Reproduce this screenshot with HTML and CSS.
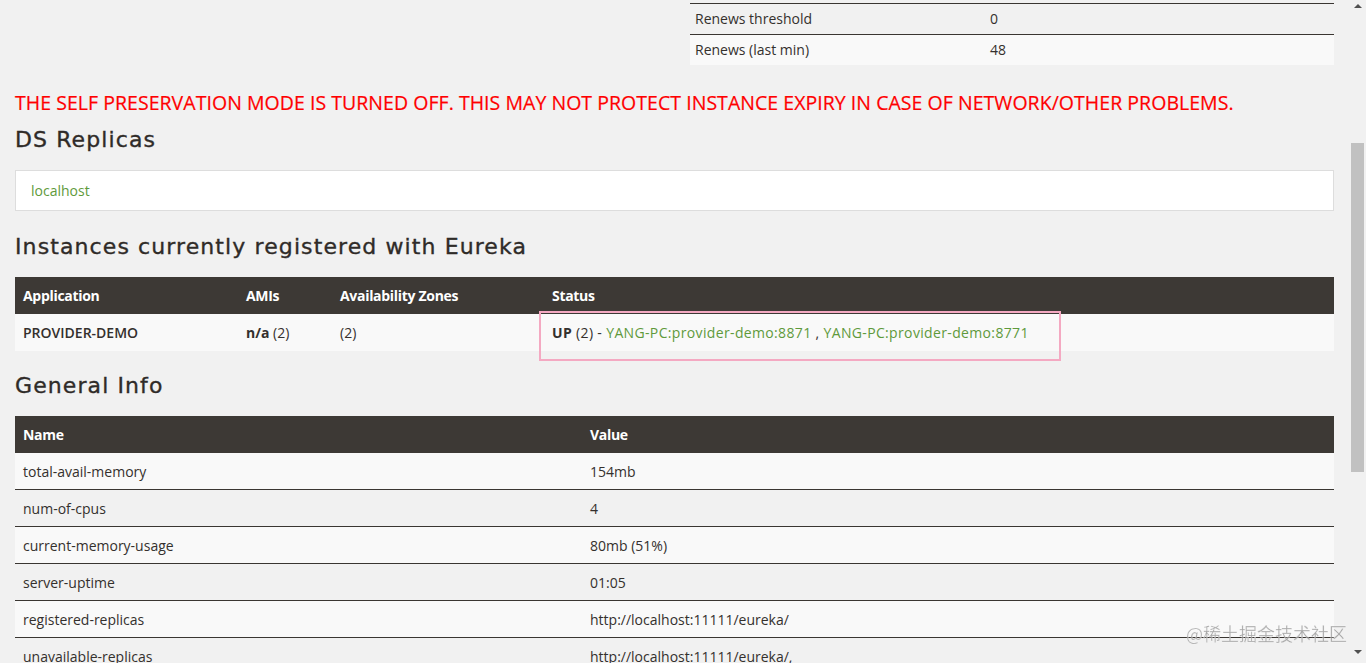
FILE: index.html
```html
<!DOCTYPE html>
<html lang="en">
<head>
<meta charset="utf-8">
<title>Eureka</title>
<link rel="stylesheet" href="styles.css">
</head>
<body>
<div class="page">
  <div class="container">
    <div class="status-row">
      <div class="col"></div>
      <div class="col">
        <table class="kv">
          <tr><td class="k">Renews threshold</td><td>0</td></tr>
          <tr class="alt"><td class="k">Renews (last min)</td><td>48</td></tr>
        </table>
      </div>
    </div>

    <h4 class="warn">THE SELF PRESERVATION MODE IS TURNED OFF. THIS MAY NOT PROTECT INSTANCE EXPIRY IN CASE OF NETWORK/OTHER PROBLEMS.</h4>

    <h1 class="title">DS Replicas</h1>
    <ul class="replicas">
      <li><a class="link" href="#">localhost</a></li>
    </ul>

    <h1 class="title">Instances currently registered with Eureka</h1>
    <table class="grid instances">
      <thead>
        <tr><th class="c-app">Application</th><th class="c-ami">AMIs</th><th class="c-zone">Availability Zones</th><th>Status</th></tr>
      </thead>
      <tbody>
        <tr class="light">
          <td class="b">PROVIDER-DEMO</td>
          <td><b>n/a</b> (2)</td>
          <td>(2)</td>
          <td class="status-cell"><b>UP</b> (2) - <a class="link" href="#">YANG-PC:provider-demo:8871</a> , <a class="link" href="#">YANG-PC:provider-demo:8771</a><span class="mark"></span></td>
        </tr>
      </tbody>
    </table>

    <h1 class="title">General Info</h1>
    <table class="grid info">
      <thead>
        <tr><th class="c-name">Name</th><th>Value</th></tr>
      </thead>
      <tbody>
        <tr class="light"><td>total-avail-memory</td><td>154mb</td></tr>
        <tr class="dark"><td>num-of-cpus</td><td>4</td></tr>
        <tr class="light"><td>current-memory-usage</td><td>80mb (51%)</td></tr>
        <tr class="dark"><td>server-uptime</td><td>01:05</td></tr>
        <tr class="light"><td>registered-replicas</td><td>http://localhost:11111/eureka/</td></tr>
        <tr class="dark"><td>unavailable-replicas</td><td>http://localhost:11111/eureka/,</td></tr>
        <tr class="light"><td>available-replicas</td><td></td></tr>
      </tbody>
    </table>
  </div>
</div>

<div class="scrollbar">
  <span class="arrow up"></span>
  <span class="thumb"></span>
  <span class="arrow down"></span>
</div>
<div class="watermark">@稀土掘金技术社区</div>
</body>
</html>
```

FILE: styles.css
```css
html, body {
  margin: 0;
  padding: 0;
  height: 100%;
  overflow: hidden;
}
body {
  background: #f1f1f1;
  font-family: "Open Sans", "Noto Sans", sans-serif;
  font-size: 14px;
  color: #34302d;
}
.page {
  width: 1349px;
  height: 663px;
  overflow: hidden;
}
.container {
  padding: 0 15px;
}
.status-row {
  display: grid;
  grid-template-columns: 645px 644px;
  column-gap: 30px;
  padding-top: 3px;
}
table {
  border-collapse: collapse;
  width: 100%;
}
.kv td {
  border-top: 1px solid #3a3632;
  height: 30px;
  padding: 0 5px;
  vertical-align: middle;
  line-height: 20px;
}
.kv td.k {
  width: 285px;
}
.kv tr.alt td {
  background: #f9f9f9;
}
.warn {
  margin: 26px 0 0;
  color: #ff0000;
  font-size: 19.5px;
  line-height: 24px;
  font-weight: 400;
  letter-spacing: 0.04px;
  -webkit-text-stroke: 0.2px #ff0000;
}
.title {
  margin: 10px 0 0;
  font-family: "DejaVu Sans", "Open Sans", sans-serif;
  font-size: 22px;
  line-height: 30px;
  font-weight: 400;
  letter-spacing: 1.1px;
  color: #2f2b28;
  -webkit-text-stroke: 0.35px #2f2b28;
}
.replicas {
  list-style: none;
  margin: 15px 0 0;
  padding: 0 15px;
  height: 39px;
  display: flex;
  align-items: center;
  background: #fff;
  border: 1px solid #dddddd;
}
.link {
  color: #5f9a3c;
  text-decoration: none;
}
.replicas + .title {
  margin-top: 21px;
}
.grid {
  margin-top: 15px;
}
.grid th {
  background: #3d3935;
  color: #ffffff;
  font-weight: 700;
  text-align: left;
  height: 37px;
  padding: 0 8px;
  vertical-align: middle;
  letter-spacing: -0.3px;
}
.grid td {
  height: 36px;
  padding: 0 8px;
  vertical-align: middle;
}
.grid tr.light td {
  background: #f9f9f9;
}
.grid tr.dark td {
  background: #f1f1f1;
}
.info tbody td {
  border-bottom: 1px solid #3a3632;
}
.instances tbody td {
  height: 37px;
}
.c-app { width: 207px; }
.c-ami { width: 78px; }
.c-zone { width: 196px; }
.c-name { width: 551px; }
.b { font-weight: 600; }
.instances + .title {
  margin-top: 20px;
}
.status-cell {
  position: relative;
  letter-spacing: 0.35px;
}
.mark {
  position: absolute;
  left: -5px;
  top: -3px;
  width: 518px;
  height: 46px;
  border: 2px solid #f4a9c2;
  pointer-events: none;
}
.scrollbar {
  position: fixed;
  top: 0;
  right: 0;
  width: 17px;
  height: 663px;
  background: #f1f1f1;
}
.thumb {
  position: absolute;
  left: 2px;
  top: 143px;
  width: 13px;
  height: 329px;
  background: #c1c1c1;
}
.arrow {
  position: absolute;
  left: 5px;
  width: 0;
  height: 0;
  border-left: 4px solid transparent;
  border-right: 4px solid transparent;
}
.arrow.up {
  top: 4px;
  border-bottom: 4px solid #505050;
}
.arrow.down {
  bottom: 9px;
  border-top: 4px solid #505050;
}
.watermark {
  position: fixed;
  left: 1186px;
  top: 620px;
  font-family: "Noto Sans CJK SC", sans-serif;
  font-size: 18px;
  line-height: 26px;
  color: rgba(140, 140, 140, 0.75);
  -webkit-text-stroke: 0.4px rgba(255,255,255,0.6);
}
```
